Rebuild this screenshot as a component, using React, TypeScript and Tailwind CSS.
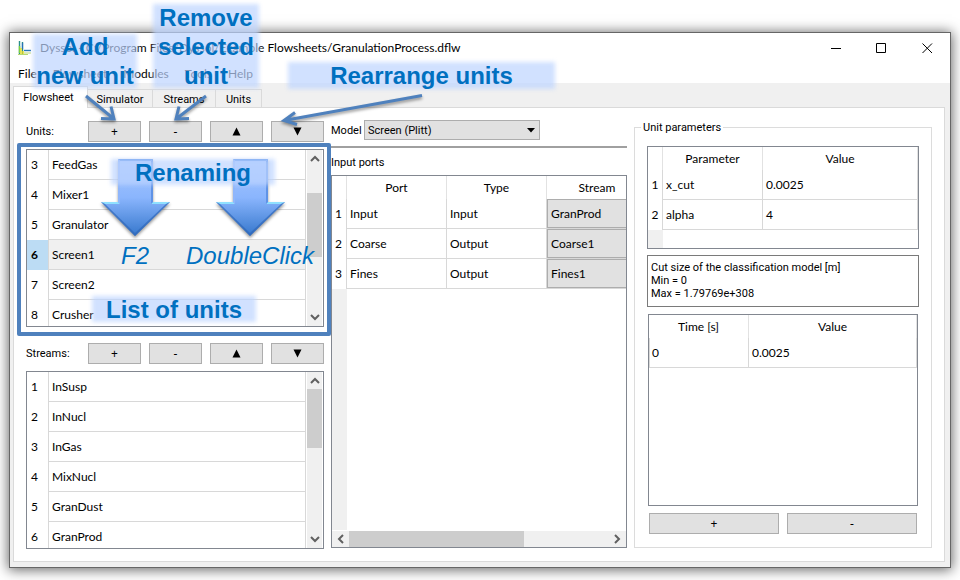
import React from "react";

const units = [
  [3, "FeedGas"],
  [4, "Mixer1"],
  [5, "Granulator"],
  [6, "Screen1"],
  [7, "Screen2"],
  [8, "Crusher"],
] as const;

const streams = [
  [1, "InSusp"],
  [2, "InNucl"],
  [3, "InGas"],
  [4, "MixNucl"],
  [5, "GranDust"],
  [6, "GranProd"],
] as const;

const ports = [
  ["Input", "Input", "GranProd"],
  ["Coarse", "Output", "Coarse1"],
  ["Fines", "Output", "Fines1"],
];

const grayButton =
  "h-[21px] border border-[#adadad] bg-[#e1e1e1] flex items-center justify-center font-['Noto_Sans',sans-serif] text-[12px] leading-none text-black";

function Chevron({ d }: { d: string }) {
  return (
    <svg width="10" height="10" viewBox="0 0 10 10" fill="none" stroke="#606060" strokeWidth="2">
      <path d={d} />
    </svg>
  );
}

function Triangle({ up = false }: { up?: boolean }) {
  return (
    <svg width="9" height="9" viewBox="0 0 9 9">
      <path d={up ? "M4.5 0.5L8.5 8.5H0.5Z" : "M0.5 0.5H8.5L4.5 8.5Z"} fill="#000" />
    </svg>
  );
}

function Toolbar({ label }: { label: string }) {
  return (
    <div className="flex items-center">
      <span className="w-[62px] pt-[2px] font-['Roboto',sans-serif] text-[11px]">{label}</span>
      <div className="grid flex-1 grid-cols-4 gap-2">
        <button className={grayButton} aria-label="Add">+</button>
        <button className={grayButton} aria-label="Remove">-</button>
        <button className={grayButton} aria-label="Move up"><Triangle up /></button>
        <button className={grayButton} aria-label="Move down"><Triangle /></button>
      </div>
    </div>
  );
}

function ItemList({
  rows,
  selected,
  thumb,
}: {
  rows: readonly (readonly [number, string])[];
  selected?: number;
  thumb: string;
}) {
  return (
    <div className="flex min-h-0 flex-1 overflow-hidden border border-[#828790] bg-white">
      <div className="min-w-0 flex-1 overflow-hidden">
        <table className="w-full table-fixed border-separate border-spacing-0 text-[12px]">
          <tbody>
            {rows.map(([n, name]) => (
              <tr key={n} className="h-[30px]">
                <th
                  scope="row"
                  className={
                    n === selected
                      ? "w-[22px] border-r border-[#d8d8d8] bg-[#bcdcf4] p-0 pl-1 text-left font-bold"
                      : "w-[22px] border-r border-[#d8d8d8] p-0 pl-1 text-left font-normal"
                  }
                >
                  {n}
                </th>
                <td
                  className={
                    n === selected
                      ? "border-r border-b border-[#d8d8d8] bg-[#f0f0f0] p-0 pl-[3px]"
                      : "border-r border-b border-[#d8d8d8] p-0 pl-[3px]"
                  }
                >
                  {name}
                </td>
              </tr>
            ))}
          </tbody>
        </table>
      </div>
      <div className="mx-px flex w-[15px] flex-col items-center justify-between bg-[#f0f0f0] py-1">
        <Chevron d="M1 7L5 3L9 7" />
        <div className="relative w-full flex-1">
          <div className={thumb} />
        </div>
        <Chevron d="M1 3L5 7L9 3" />
      </div>
    </div>
  );
}

function AppIcon() {
  return (
    <svg width="14" height="16" viewBox="0 0 14 16">
      <path d="M1.5 1V14M4.5 2V14" stroke="#2a8f8a" strokeWidth="1.4" />
      <path d="M1.5 6V13" stroke="#7fd03a" strokeWidth="1.4" />
      <path d="M3 8V15M5 11V15" stroke="#f0e020" strokeWidth="1.4" />
      <path d="M6 10.5H13" stroke="#2a78b8" strokeWidth="1.4" />
      <path d="M6 13H13M0 14.5H10" stroke="#b8d870" strokeWidth="1" />
      <path d="M4.5 3V9" stroke="#2a6fb8" strokeWidth="1.2" />
    </svg>
  );
}

function Callout({ lines, place }: { lines: string[]; place: string }) {
  return (
    <div className={place}>
      <div className="absolute inset-0 bg-[rgb(189,212,255)]/70 blur-[2px]" />
      <div className="relative whitespace-nowrap text-center text-[24px] leading-[29px] font-bold">
        {lines.map((l) => (
          <div key={l}>{l}</div>
        ))}
      </div>
    </div>
  );
}

function BlockArrow({ x }: { x: number }) {
  return (
    <g transform={`translate(${x} 159)`} filter="url(#soft)">
      <path d="M17 0H52V43H69L34 77L0 43H17Z" fill="url(#block)" />
      <path d="M17 0H52L50 2H19Z" fill="#6fa0ee" />
      <path d="M0 43H17L19 45H4ZM69 43H52L50 45H65Z" fill="#8fe0ff" />
      <path d="M0 43L34 77L34 74L4 45Z" fill="#2f66b8" opacity="0.7" />
      <path d="M69 43L34 77L34 74L65 45Z" fill="#2f66b8" opacity="0.7" />
      <path d="M17 0V43L19 45V2Z" fill="#8fb6fb" />
      <path d="M52 0V43L50 45V2Z" fill="#5f93e6" />
    </g>
  );
}

function Annotations() {
  return (
    <div className="pointer-events-none absolute inset-0 font-['Liberation_Sans',Arial,sans-serif] text-[#0070c0]">
      <div className="absolute top-[143px] left-[17px] h-[193px] w-[314px] rounded-[2px] border-4 border-[#4f81bd]" />
      <svg className="absolute top-0 left-0" width="960" height="580" viewBox="0 0 960 580" fill="none">
        <defs>
          <linearGradient id="block" x1="0" y1="0" x2="0" y2="1">
            <stop offset="0" stopColor="#a8c8ff" />
            <stop offset="0.5" stopColor="#8ab5fd" />
            <stop offset="1" stopColor="#3577cc" />
          </linearGradient>
          <filter id="soft" x="-20%" y="-20%" width="140%" height="150%" colorInterpolationFilters="sRGB">
            <feDropShadow dx="0" dy="2" stdDeviation="1.5" floodColor="#000" floodOpacity="0.4" />
          </filter>
        </defs>
        <g stroke="#4f81bd" strokeWidth="3" filter="url(#soft)">
          <path d="M86 96L114 119M101 118.500L114 119L111 106.500" />
          <path d="M206 96L176 119M179 106.500L176 119L189 118.500" />
          <path d="M422 95.500L284 120.500M295 112.500L284 120.500L297 124.500" />
        </g>
        <BlockArrow x={101} />
        <BlockArrow x={216} />
      </svg>
      <Callout lines={["Add", "new unit"]} place="absolute top-[34px] left-[33px] flex h-[54px] w-[104px] items-center justify-center" />
      <Callout lines={["Remove", "selected", "unit"]} place="absolute top-[4px] left-[153px] flex h-[84px] w-[106px] items-center justify-center" />
      <Callout lines={["Rearrange units"]} place="absolute top-[62px] left-[288px] flex h-[27px] w-[267px] items-center justify-center" />
      <Callout lines={["Renaming"]} place="absolute top-[159px] left-[111px] flex h-[26px] w-[164px] items-center justify-center" />
      <Callout lines={["List of units"]} place="absolute top-[296px] left-[92px] flex h-[26px] w-[164px] items-center justify-center" />
      <div className="absolute top-[242px] left-[121px] text-[24px] leading-7 italic">F2</div>
      <div className="absolute top-[242px] left-[186px] text-[24px] leading-7 italic">DoubleClick</div>
    </div>
  );
}

export default function App() {
  return (
    <div className="relative flex h-screen flex-col overflow-hidden bg-white px-[9px] pt-8 pb-3 font-['Lato','Open_Sans',sans-serif] text-[12px] text-black">
      <div className="flex min-h-0 flex-1 flex-col border border-[#666] bg-white shadow-[0_1px_12px_1px_rgba(0,0,0,0.6)]">
        <header className="flex h-[30px] shrink-0 items-center pl-2">
          <AppIcon />
          <h1 className="ml-2 flex-1 whitespace-nowrap text-[12px]">
            Dyssol - C:/Program Files/Dyssol/Example Flowsheets/GranulationProcess.dflw
          </h1>
          <div className="flex items-center gap-[35px] pr-[17px]">
            <button aria-label="Minimize">
              <svg width="10" height="11" viewBox="0 0 10 11"><path d="M0 5.5H10" stroke="#000" /></svg>
            </button>
            <button aria-label="Maximize">
              <svg width="11" height="11" viewBox="0 0 11 11"><path d="M1 1H10V10H1Z" transform="translate(-0.500 -0.500)" fill="none" stroke="#000" /></svg>
            </button>
            <button aria-label="Close">
              <svg width="11" height="11" viewBox="0 0 11 11"><path d="M0.500 0.500L10 10M10 0.500L0.500 10" stroke="#000" /></svg>
            </button>
          </div>
        </header>
        <nav className="flex h-5 shrink-0 items-center gap-4 pt-px pl-2 text-[12px]">
          <button>File</button>
          <button>Flowsheet</button>
          <button>Modules</button>
          <button>Tools</button>
          <button>Help</button>
        </nav>
        <main className="flex min-h-0 flex-1 flex-col bg-[#f0f0f0] pt-[3px] pr-[5px] pb-[5px] pl-[3px]">
          <div role="tablist" className="relative flex shrink-0 items-end font-['Roboto',sans-serif] text-[11px]">
            <button role="tab" aria-selected="true" className="-mb-px h-[22px] w-[75px] border border-b-0 border-[#dadada] bg-white pt-[2px] pr-1">Flowsheet</button>
            <button role="tab" className="h-[18px] w-[65px] border-t border-r border-[#dadada] pt-[2px]">Simulator</button>
            <button role="tab" className="h-[18px] w-[63px] border-t border-r border-[#dadada] pt-[2px]">Streams</button>
            <button role="tab" className="h-[18px] w-[46px] border-t border-r border-[#dadada] pt-[2px]">Units</button>
          </div>
          <div className="grid min-h-0 flex-1 grid-cols-[298fr_296fr_298fr] gap-[7px] border border-[#dadada] bg-white px-3 pt-3 pb-3">
            <section className="flex min-h-0 flex-col gap-[7px] pt-px">
              <Toolbar label="Units:" />
              <ItemList rows={units} selected={6} thumb="absolute top-[29px] h-16 w-full bg-[#cdcdcd]" />
              <div className="h-[2px] shrink-0" />
              <Toolbar label="Streams:" />
              <ItemList rows={streams} thumb="absolute top-[3px] h-[59px] w-full bg-[#cdcdcd]" />
            </section>

            <section className="flex min-h-0 min-w-0 flex-col pb-px">
              <div className="flex items-center font-['Roboto',sans-serif] text-[11px]">
                <label htmlFor="model" className="w-[33px] pt-[2px] whitespace-nowrap">Model</label>
                <div className="relative w-44">
                  <select id="model" className="block h-5 w-full appearance-none border border-[#adadad] bg-[#e1e1e1] pt-px pl-[3px] leading-none">
                    <option>Screen (Plitt)</option>
                  </select>
                  <svg className="absolute top-2 right-[5px]" width="8" height="5" viewBox="0 0 8 5"><path d="M0 0H8L4 4.500Z" fill="#000" /></svg>
                </div>
              </div>
              <div className="mt-[6px] h-[2px] bg-[#a0a0a0]" />
              <h2 className="flex h-[27px] items-center pt-1 font-['Roboto',sans-serif] text-[11px]">Input ports</h2>
              <div className="flex min-h-0 flex-1 flex-col border border-[#828790]">
                <div className="flex min-h-0 flex-1 flex-col overflow-hidden">
                  <table className="w-[315px] shrink-0 table-fixed border-separate border-spacing-0">
                    <thead>
                      <tr className="h-[23px]">
                        <th className="w-[15px] border-r border-[#e2e2e2] p-0" />
                        <th className="w-[100px] border-r border-[#e2e2e2] p-0 font-normal">Port</th>
                        <th className="w-[100px] border-r border-[#e2e2e2] p-0 font-normal">Type</th>
                        <th className="w-[100px] p-0 font-normal">Stream</th>
                      </tr>
                    </thead>
                    <tbody>
                      {ports.map(([port, type, stream], i) => (
                        <tr key={port} className="h-[30px]">
                          <th scope="row" className="border-r border-[#d8d8d8] p-0 pr-px font-normal">{i + 1}</th>
                          <td className="border-r border-b border-[#d8d8d8] p-0 pl-[3px]">{port}</td>
                          <td className="border-r border-b border-[#d8d8d8] p-0 pl-[3px]">{type}</td>
                          <td className="border-b border-[#d8d8d8] p-0">
                            <select aria-label={`Stream for ${port}`} className="block h-[29px] w-full appearance-none border border-[#adadad] bg-[#e1e1e1] pl-[3px]">
                              <option>{stream}</option>
                            </select>
                          </td>
                        </tr>
                      ))}
                    </tbody>
                  </table>
                  <div className="w-[15px] flex-1 bg-[#f0f0f0]" />
                </div>
                <div className="mt-px flex h-4 items-center bg-[#f0f0f0] px-1">
                  <Chevron d="M7 1L3 5L7 9" />
                  <div className="relative ml-[3px] h-full flex-1">
                    <div className="h-full w-2/3 bg-[#cdcdcd]" />
                  </div>
                  <Chevron d="M3 1L7 5L3 9" />
                </div>
              </div>
            </section>

            <section className="flex min-h-0 min-w-0 pb-px">
              <fieldset className="flex min-h-0 min-w-0 flex-1 flex-col border border-[#dcdcdc] px-3 pb-[13px]">
                <legend className="-ml-[6px] px-[2px] pt-px font-['Roboto',sans-serif] text-[11px] leading-[13px]">Unit parameters</legend>
                <div className="mt-3 flex h-[103px] shrink-0 flex-col border border-[#828790]">
                  <table className="w-full shrink-0 table-fixed border-separate border-spacing-0">
                    <thead>
                      <tr className="h-[23px]">
                        <th className="w-[15px] border-r border-[#e2e2e2] p-0" />
                        <th className="w-[100px] border-r border-[#e2e2e2] p-0 font-normal">Parameter</th>
                        <th className="border-r border-[#e2e2e2] p-0 font-normal">Value</th>
                      </tr>
                    </thead>
                    <tbody>
                      {[["x_cut", "0.0025"], ["alpha", "4"]].map(([p, v], i) => (
                        <tr key={p} className="h-[30px]">
                          <th scope="row" className="border-r border-[#d8d8d8] p-0 font-normal">{i + 1}</th>
                          <td className="border-r border-b border-[#d8d8d8] p-0 pl-[3px]">{p}</td>
                          <td className="border-r border-b border-[#d8d8d8] p-0 pl-[3px]">{v}</td>
                        </tr>
                      ))}
                    </tbody>
                  </table>
                  <div className="w-[15px] flex-1 bg-[#f0f0f0]" />
                </div>
                <div className="mt-[6px] h-[52px] shrink-0 border border-[#7a7a7a] px-[3px] pt-[5px] font-['Roboto',sans-serif] text-[11px] leading-[13px]">
                  <p>Cut size of the classification model [m]</p>
                  <p>Min = 0</p>
                  <p>Max = 1.79769e+308</p>
                </div>
                <div className="mx-px mt-[7px] min-h-0 flex-1 border border-[#828790]">
                  <table className="w-full table-fixed border-separate border-spacing-0">
                    <thead>
                      <tr className="h-[23px]">
                        <th className="w-[100px] border-r border-[#e2e2e2] p-0 font-normal">Time [s]</th>
                        <th className="border-r border-[#e2e2e2] p-0 font-normal">Value</th>
                      </tr>
                    </thead>
                    <tbody>
                      <tr className="h-[30px]">
                        <td className="border-r border-b border-l border-[#d8d8d8] p-0 pl-[2px]">0</td>
                        <td className="border-r border-b border-[#d8d8d8] p-0 pl-[3px]">0.0025</td>
                      </tr>
                    </tbody>
                  </table>
                </div>
                <div className="mx-[2px] mt-[7px] grid grid-cols-2 gap-2">
                  <button className={grayButton} aria-label="Add value">+</button>
                  <button className={grayButton} aria-label="Remove value">-</button>
                </div>
              </fieldset>
            </section>
          </div>
        </main>
      </div>
      <Annotations />
    </div>
  );
}
